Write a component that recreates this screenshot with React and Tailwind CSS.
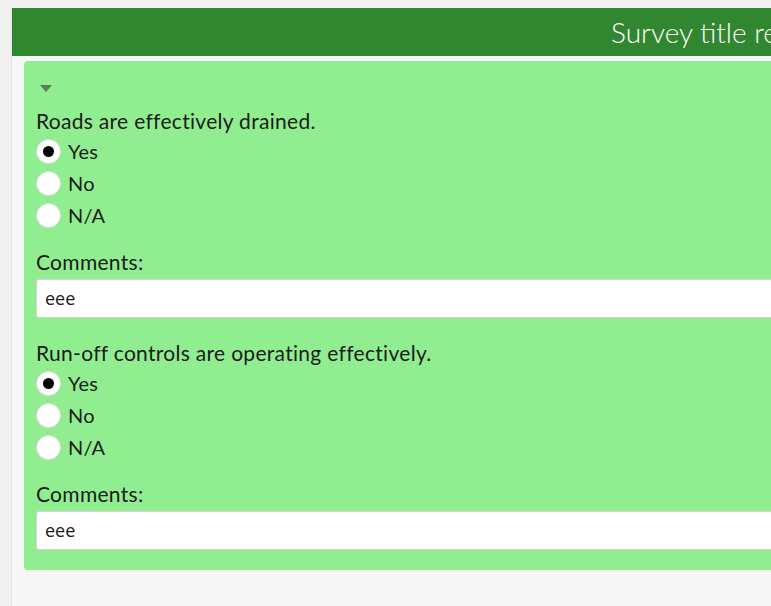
import React from "react";

function Radio({ checked, label }) {
  return (
    <div className="flex items-center h-[32px]">
      <div className="w-[25px] h-[25px] rounded-full bg-white border border-[#d9d9d9] flex items-center justify-center">
        {checked && <div className="w-[11px] h-[11px] rounded-full bg-black" />}
      </div>
      <span className="ml-[7px] text-[20px] tracking-[0.2px] leading-[28px] text-[#1b1b1b]">{label}</span>
    </div>
  );
}

function Question({ title, value, selected }) {
  return (
    <div>
      <div className="text-[21px] tracking-[0.3px] leading-[28px] text-[#1b1b1b]">{title}</div>
      <Radio checked={selected === "Yes"} label="Yes" />
      <Radio checked={selected === "No"} label="No" />
      <Radio checked={selected === "N/A"} label="N/A" />
      <div className="mt-[17px] text-[21px] tracking-[0.3px] leading-[28px] text-[#1b1b1b]">Comments:</div>
      <div className="mt-[3px] h-[39px] bg-white border border-[#d4d4d4] rounded-[3px] flex items-center pl-[8px] text-[18px] text-[#1b1b1b] font-['Open_Sans',sans-serif]">
        {value}
      </div>
    </div>
  );
}

export default function App() {
  return (
    <div className="w-[771px] h-[606px] overflow-hidden bg-[#f0f0f0] pt-[8px] pl-[11px] font-['Lato',sans-serif]">
      <div className="w-[900px] h-[620px] bg-[#f6f7f6] border-l border-[#e4e4e4]">
        <div className="h-[48px] bg-[#318630] flex items-center pl-[599px] overflow-hidden">
          <span className="text-white text-[28px] font-light whitespace-nowrap">Survey title required</span>
        </div>
        <div className="ml-[12px] mt-[5px] bg-[#90ee90] rounded-[4px] pl-[12px] pt-[24px] pb-[20px]">
          <svg width="12" height="7" viewBox="0 0 12 7" className="block ml-[4px]">
            <polygon points="0,0 12,0 6,7" fill="#5a7d58" />
          </svg>
          <div className="mt-[15px]">
            <Question title="Roads are effectively drained." value="eee" selected="Yes" />
          </div>
          <div className="mt-[21px]">
            <Question title="Run-off controls are operating effectively." value="eee" selected="Yes" />
          </div>
        </div>
      </div>
    </div>
  );
}
